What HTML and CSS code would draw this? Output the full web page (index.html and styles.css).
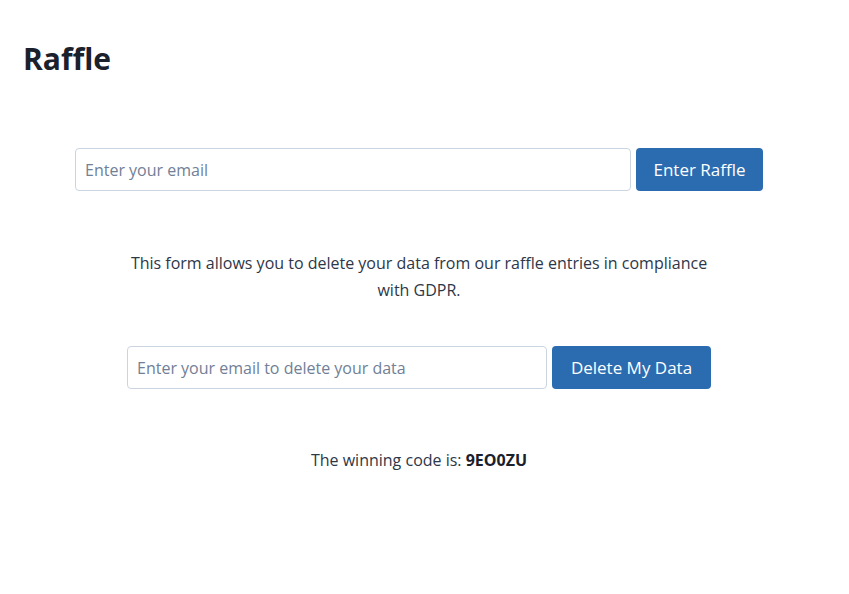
FILE: index.html
```html
<!DOCTYPE html>
<html lang="en">
<head>
<meta charset="utf-8">
<title>Raffle</title>
<link rel="stylesheet" href="styles.css">
</head>
<body>
<main class="page">
  <h1 class="title">Raffle</h1>
  <form class="form form-enter">
    <input class="field field-enter" type="email" placeholder="Enter your email">
    <button class="btn btn-enter" type="button">Enter Raffle</button>
  </form>
  <p class="info">This form allows you to delete your data from our raffle entries in compliance with GDPR.</p>
  <form class="form form-delete">
    <input class="field field-delete" type="email" placeholder="Enter your email to delete your data">
    <button class="btn btn-delete" type="button">Delete My Data</button>
  </form>
  <p class="code">The winning code is: <strong>9EO0ZU</strong></p>
</main>
</body>
</html>
```

FILE: styles.css
```css
* { box-sizing: border-box; }
html, body { margin: 0; background: #fff; }
body {
  font-family: "Open Sans", "Noto Sans", sans-serif;
  color: #2d3748;
  font-size: 16px;
}
.page {
  padding: 0 34px 0 23px;
}
.title {
  margin: 39px 0 0;
  font-size: 30px;
  line-height: 40px;
  font-weight: 700;
  color: #1a202c;
}
.form {
  display: flex;
  justify-content: center;
  gap: 5px;
}
.form-enter { margin-top: 69px; }
.form-delete { margin-top: 42px; }
.field {
  height: 43px;
  border: 1px solid #cbd5e0;
  border-radius: 4px;
  padding: 0 9px;
  font-family: inherit;
  font-size: 16px;
  color: #2d3748;
  background: #fff;
}
.field::placeholder { color: #718096; }
.field-enter { width: 556px; }
.field-delete { width: 420px; }
.btn {
  height: 43px;
  border: 0;
  border-radius: 4px;
  background: #2b6cb0;
  color: #fff;
  font-family: inherit;
  font-size: 17px;
  padding: 0;
}
.btn-enter { width: 127px; }
.btn-delete { width: 159px; }
.info {
  margin: 59px auto 0;
  max-width: 600px;
  text-align: center;
  line-height: 27px;
}
.code {
  margin: 58px 0 0;
  text-align: center;
  line-height: 26px;
}
.code strong { font-weight: 700; color: #1a202c; }
```
